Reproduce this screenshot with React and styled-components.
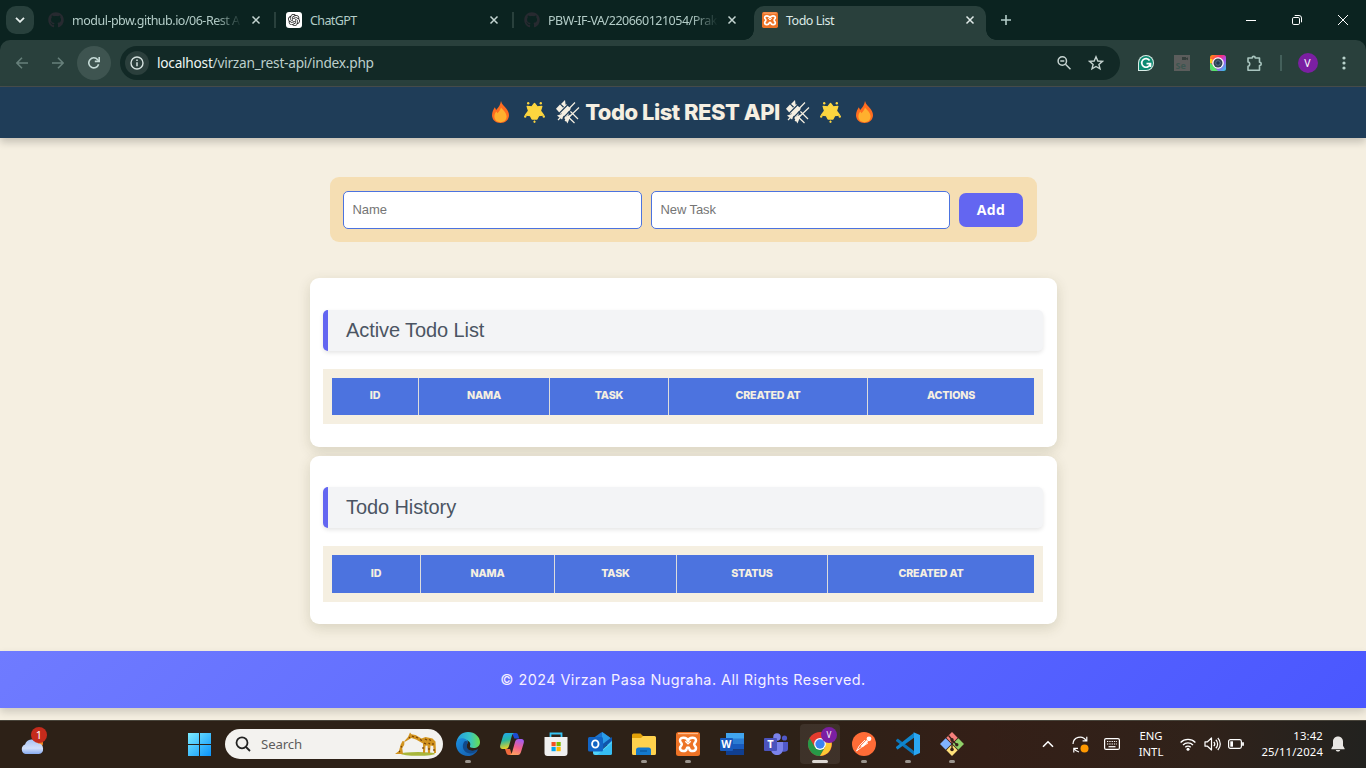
import React from 'react';
import styled, { createGlobalStyle } from 'styled-components';
import { FaGithub } from 'react-icons/fa';
import { SiOpenai } from 'react-icons/si';

const GlobalStyle = createGlobalStyle`
  * { box-sizing: border-box; }
  body { margin: 0; overflow: hidden; }
  svg { display: block; flex: none; }
`;

const UI = "'Noto Sans', 'Open Sans', sans-serif";
const POP = "Inter, 'Open Sans', sans-serif";
const ARIAL = "'Liberation Sans', Arial, sans-serif";

const Screen = styled.div`
  width: 1366px; height: 768px; display: flex; flex-direction: column; overflow: hidden;
  background: #f5efe1; font-family: ${UI};
`;

/* Browser chrome */
const TabStrip = styled.div`
  height: 40px; flex: none; background: #0b2320; display: flex; align-items: flex-start;
`;
const TabSearch = styled.div`
  width: 28px; height: 28px; margin: 6px 6px 0; border-radius: 10px; background: #28403c;
  display: flex; align-items: center; justify-content: center;
`;
const Tab = styled.div`
  width: 238px; height: 40px; padding-left: 8px; display: flex; align-items: center;
  font-size: 12.5px; color: #b3ccc7;
`;
const ActiveTab = styled(Tab)`
  position: relative; width: 232px; height: 34px; margin-top: 6px; padding: 0 0 6px 8px;
  background: #29403c; color: #dce9e6; border-radius: 10px 10px 0 0;
  &::before, &::after {
    content: ''; position: absolute; bottom: 0; width: 10px; height: 10px;
  }
  &::before { left: -10px; background: radial-gradient(circle at 0 0, transparent 9.5px, #29403c 10px); }
  &::after { right: -10px; background: radial-gradient(circle at 100% 0, transparent 9.5px, #29403c 10px); }
`;
const TabTitle = styled.span`
  width: 170px; margin: 2px -2px 0 8px; line-height: 18px; white-space: nowrap;
  letter-spacing: ${p => p.$ls || '-0.5px'};
  ${p => p.$fade && `-webkit-mask-image: linear-gradient(90deg, #000 143px, transparent 170px);`}
`;
const TabSep = styled.div`width: 2px; height: 16px; margin-left: 10px; background: #29403c;`;
const Favicon = styled.div`
  width: 16px; height: 16px; flex: none; border-radius: 3px; display: flex; align-items: center; justify-content: center;
  background: ${p => p.$bg || 'transparent'}; color: ${p => p.$c || '#fff'};
`;
const CloseSlot = styled.div`width: 16px; height: 16px; margin-left: 8px; display: flex; align-items: center; justify-content: center;`;
const NewTab = styled.div`width: 40px; height: 40px; display: flex; align-items: center; justify-content: center;`;
const WindowControls = styled.div`margin-left: auto; display: flex;`;
const WinButton = styled.div`width: 46px; height: 40px; display: flex; align-items: center; justify-content: center;`;

const ToolbarBack = styled.div`background: #0b2320; height: 47px; flex: none;`;
const Toolbar = styled.div`
  height: 47px; background: #29403c; border-radius: 10px 10px 0 0; border-bottom: 1px solid #474e4d;
  display: flex; align-items: center; padding-left: 4px;
`;
const Slot = styled.div`
  width: ${p => p.$w || 36}px; height: ${p => p.$h || 34}px; flex: none; display: flex; align-items: center; justify-content: center;
`;
const Reload = styled(Slot)`border-radius: 50%; background: #3e5450; margin: 0 9px 0 1px; `;
const Omnibox = styled.div`
  width: 1000px; height: 34px; border-radius: 17px; background: #122926; display: flex; align-items: center; padding: 0 8px 0 5px;
`;
const InfoDot = styled.div`width: 24px; height: 24px; border-radius: 50%; background: #2b3f3c; display: flex; align-items: center; justify-content: center;`;
const Url = styled.div`
  flex: 1; margin-left: 8px; color: #bdcfcb; font-size: 13.7px; line-height: 20px; letter-spacing: -0.25px;
  b { font-weight: 400; color: #eef6f4; }
`;
const Avatar = styled.div`
  width: 20px; height: 20px; border-radius: 50%; background: #7b1fa2; color: #fff; font-size: 10.5px;
  display: flex; align-items: center; justify-content: center;
`;
const Divider = styled.div`width: 2px; height: 16px; background: #44605b;`;

/* Page */
const Page = styled.div`height: 633px; flex: none; display: flex; flex-direction: column; align-items: center; background: #f5efe1;`;
const Header = styled.header`
  width: 100%; height: 51px; flex: none; background: #1f3d58; box-shadow: 0 4px 8px rgba(0,0,0,.2);
  display: flex; align-items: center; justify-content: center; padding: 0 2px 1px 0;
`;
const Title = styled.h1`
  width: 194px; margin: 0 6px; font: 800 22px/30px ${POP}; letter-spacing: -0.49px; color: #f5efe1; white-space: nowrap;
  display: flex; justify-content: center;
`;
const Gap = styled.span`width: ${p => p.$w}px;`;
const Form = styled.form`
  width: 707px; height: 65px; margin-top: 39px; flex: none; border-radius: 9px; background: #f5deb3; padding: 0 14px 0 13px;
  display: flex; align-items: center; gap: 9px;
`;
const Field = styled.input`
  width: 299px; height: 38px; padding: 0 9px; border: 1px solid #4c73df; border-radius: 5px; background: #fff;
  font: 13px ${ARIAL}; outline: 0;
  &::placeholder { color: #757575; opacity: 1; letter-spacing: -0.1px; }
`;
const AddButton = styled.button`
  width: 64px; height: 34px; padding: 0 0 0 1px; border: 0; border-radius: 7px; background: #6366f1; color: #fff;
  font: 700 14px ${"'Open Sans', sans-serif"}; letter-spacing: .3px;
`;
const Card = styled.section`
  width: 747px; height: ${p => p.$h}px; flex: none; margin-top: ${p => p.$mt}px; padding: ${p => p.$pt}px 14px 0 13px;
  background: #fff; border-radius: 9px; box-shadow: 0 4px 13px rgba(60,60,20,.16);
`;
const CardTitle = styled.h2`
  height: 41px; margin: 0 0 18px; padding-left: 18.5px; border-left: 5px solid #6366f1; border-radius: 5px; background: #f3f4f6;
  box-shadow: 0 2px 4px rgba(0,0,0,.1); font: 400 20px/40px ${ARIAL}; letter-spacing: -0.09px; color: #4b5563;
`;
const TableFrame = styled.div`height: ${p => p.$h}px; padding: 9px; background: #f5efe1;`;
const HeadRow = styled.div`
  height: 100%; display: grid; grid-template-columns: ${p => p.$cols}; background: #4c73df;
`;
const HeadCell = styled.div`
  display: flex; align-items: center; justify-content: center; padding: 0 0 2px 1px;
  border-right: ${p => (p.$last ? 0 : 1)}px solid #ddd;
  font: 800 10.7px ${POP}; letter-spacing: -0.2px; color: #f5efe1;
`;
const Footer = styled.footer`
  width: 100%; height: 57px; flex: none; margin-top: 27px; padding-bottom: 1px; display: flex; align-items: center; justify-content: center;
  background: linear-gradient(135deg, #6f7bff, #4a57ff); box-shadow: 0 4px 8px rgba(0,0,0,.16);
  font: 400 14.4px ${POP}; letter-spacing: .46px; color: #f5efff;
`;

/* Taskbar */
const Taskbar = styled.div`
  height: 48px; flex: none; border-top: 1px solid #48443a; padding-bottom: 1px; display: flex; align-items: center;
  background: linear-gradient(90deg, #2d2117, #2d2117 58%, #341f17 72%, #30221a 88%, #22221f);
  color: #fff;
`;
const Weather = styled.div`position: relative; width: 24px; height: 18px; margin-left: 20px; padding-top: 3px;`;
const Badge = styled.div`
  position: absolute; left: 11px; top: -8px; width: 16px; height: 16px; border-radius: 50%; background: #c42b1c;
  font-size: 11px; line-height: 16px; text-align: center;
`;
const StartSlot = styled.div`width: 23px; margin: 0 14px 0 144px;`;
const SearchPill = styled.div`
  width: 218px; height: 30px; border-radius: 15px; background: #f3f2ef; display: flex; align-items: center; padding: 0 5px 0 10px;
  color: #5c5c5c; font-size: 13.2px;
`;
const SearchText = styled.span`flex: 1; margin-left: 10px; line-height: 18px; letter-spacing: -0.1px;`;
const Apps = styled.div`display: flex; margin-left: 5px; gap: 4px;`;
const AppButton = styled.div`
  position: relative; width: 40px; height: 40px; border-radius: 4px; display: flex; align-items: center; justify-content: center;
  background: ${p => (p.$active ? 'rgba(255,255,255,.08)' : 'transparent')};
  &::after {
    content: ''; position: absolute; bottom: 1px; left: ${p => (p.$active ? 12 : 17)}px; width: ${p => (p.$active ? 16 : 6)}px; height: 3px;
    border-radius: 2px; background: ${p => (p.$active ? '#ddd8d2' : '#9a948d')}; display: ${p => (p.$open || p.$active ? 'block' : 'none')};
  }
`;
const Profile = styled.div`
  position: absolute; left: 21px; top: 3px; width: 16px; height: 16px; border-radius: 50%; background: #7b1fa2; font-size: 8px;
  line-height: 16px; text-align: center;
`;
const Tray = styled.div`margin-left: auto; display: flex; align-items: center; padding-right: 13px;`;
const TwoLines = styled.div`
  width: ${p => p.$w}px; text-align: ${p => p.$align}; font-size: 11.3px; line-height: 16px; white-space: nowrap;
  letter-spacing: ${p => p.$ls || 0};
`;

const Close = ({ c = '#c4d5d1' }) => (
  <CloseSlot><svg width="10" height="10" viewBox="0 0 10 10" stroke={c} strokeWidth="1.5"><path d="M1.5 1.5l7 7M8.500 1.5L1.5 8.500" /></svg></CloseSlot>
);
const Flame = () => (
  <svg width="17" height="22" viewBox="0 0 17 22">
    <path d="M9 0c.8 3.600 3 4.600 5 7.200C15.600 9.300 17 11.500 17 14.300 17 18.800 13.400 22 8.500 22S0 18.800 0 14.300C0 11 1.500 8.200 2.800 6.200c.7 1 1 2 1.300 2.800C6.600 6.500 8.500 3.500 9 0z" fill="#ff6d20" />
    <path d="M9 6.500c1 2 5.600 4.500 5.600 9 0 3.500-2.500 5.700-6 5.700s-6.200-2.200-6.200-5.700c0-2 .8-3.400 1.900-4.900.5.600.8 1 1.100 1.600C7 10.700 8.300 9 9 6.500z" fill="#ffb02e" />
  </svg>
);
const GlowStar = () => (
  <svg width="21" height="21" viewBox="0 0 21 21" fill="#fcd53f">
    <path d="M10.500 1.500L13.200 5l4.600-.6-1.400 4.500 3 4.100-4.800.6-1.700 3.400h-4.800l-1.700-3.400-4.800-.6 3-4.100-1.400-4.500L7.800 5z" stroke="#fcd53f" strokeWidth="1.400" strokeLinejoin="round" />
    <path d="M10.500 18.300l1.200 1.300c0 .9-.6 1.400-1.200 1.400s-1.200-.5-1.200-1.400z" />
    <circle cx="4.200" cy="1.300" r="1.200" /><circle cx="16.800" cy="1.300" r="1.200" /><circle cx="1.200" cy="14.500" r="1.200" /><circle cx="19.800" cy="14.500" r="1.200" />
  </svg>
);
const Wedges = () => (
  <svg width="24" height="24" viewBox="0 0 24 24">
    <g stroke="#f5efe1" strokeWidth="1.200" fill="none"><path d="M8 5l14 14M4 9l14.500 14M2 20L19 2.500M9 21L23 7.500" /></g>
    <g fill="#f5efe1"><path d="M9 0l1 8.500L5 4z" /><path d="M4 4.500l5.500 5.800L4.500 14 0 8.800z" /><path d="M10 4l5 5-4 4-4.500-4.500z" /><path d="M8 9l5 5-3.500 3.500-5-5z" /><path d="M1 15.500L9 13l-3 6.500z" /><path d="M8 17.500l7-3-3.500 9z" /></g>
    <path d="M3 13.500l13-13M7 18l13-13" stroke="#1f3d58" strokeWidth="1.100" />
  </svg>
);
const Xampp = ({ s = 16 }) => (
  <svg width={s} height={s} viewBox="0 0 24 24">
    <rect width="24" height="24" rx="2.500" fill="#ed7326" /><path d="M2 1.600h20" stroke="#ffba8a" strokeWidth="1.200" />
    <path d="M12 8.800C10.800 4.900 4 4.500 4 8.600c0 1.900 1.800 2 1.800 3.700S4 14.200 4 16c0 4 6 3.800 6.600.9.200-1 .6-1.300 1.400-1.300s1.200.3 1.400 1.300c.6 2.900 6.600 3.100 6.600-.9 0-1.800-1.800-2-1.800-3.700s1.800-1.800 1.800-3.700c0-4.100-6.800-3.700-8 .2z" stroke="#fff" strokeWidth="2.500" fill="none" strokeLinejoin="round" />
    <path d="M9.300 9.300L12 11.800l2.700-2.500" stroke="#fff" strokeWidth="1.500" fill="none" />
  </svg>
);
const Grammarly = () => (
  <svg width="16" height="16" viewBox="0 0 16 16"><path d="M0 16V8a8 8 0 1 1 8 8z" fill="#d9ece7" /><path d="M1 15V8a7 7 0 1 1 7 7z" fill="#0e8a72" /><path d="M11.600 5.500A4.300 4.300 0 1 0 12.200 9M8.500 8.700h4V12" fill="none" stroke="#fff" strokeWidth="1.700" /></svg>
);
const CameraIcon = () => (
  <svg width="16" height="16" viewBox="0 0 16 16">
    <defs><linearGradient id="cam" x1="0" y1="0" x2="1" y2="1"><stop offset="0" stopColor="#ff9d00" /><stop offset=".35" stopColor="#ff2d6f" /><stop offset=".6" stopColor="#b04cf0" /><stop offset="1" stopColor="#28d3e6" /></linearGradient></defs>
    <rect width="16" height="16" rx="2.500" fill="url(#cam)" /><path d="M0 5v8a3 3 0 0 0 3 3h5L0 7z" fill="#54e36a" /><path d="M0 4h2.500v4H0z" fill="#ffcf1c" />
    <circle cx="8" cy="8" r="5.800" fill="#fff" /><circle cx="8" cy="8" r="4.500" fill="#344555" /><circle cx="8" cy="8" r="2.300" fill="#203850" stroke="#5e7b95" strokeWidth=".8" />
  </svg>
);
const EdgeIcon = () => (
  <svg width="24" height="24" viewBox="0 0 24 24">
    <defs><linearGradient id="e1" x1="0" y1=".3" x2="1" y2=".3"><stop offset="0" stopColor="#249be0" /><stop offset=".55" stopColor="#35c3c8" /><stop offset="1" stopColor="#6ade4d" /></linearGradient>
      <linearGradient id="e2" x1="0" y1="0" x2="1" y2="1"><stop offset="0" stopColor="#1b8fe0" /><stop offset="1" stopColor="#1458a8" /></linearGradient></defs>
    <path d="M.5 10C1.500 4 6 0 12 0c7 0 12 5 12 10 0 4-3 6-6.500 6-2.500 0-4-.8-3.500-2 .7-1.500.6-5-4-6-3.500-.8-7 0-9.500 2z" fill="url(#e1)" />
    <path d="M0 12c0-4 4-6.500 8-5.500C12 7.500 12.500 10 11 12c-1.500 2-.5 7 5 7 2.500 0 4.500-1 5.800-1.800C20.500 21 16.500 24 12 24 5 24 0 18.500 0 12z" fill="url(#e2)" />
    <path d="M8 10c-3 5 0 11 6 11.500 3 .2 6-1.500 7.800-4.300-5 2.600-11 1.800-11-3.200 0-2 2-3 .2-4.500-1-.7-2.200-.5-3 .5z" fill="#114a8b" />
  </svg>
);
const CopilotIcon = () => (
  <svg width="24" height="22" viewBox="0 0 24 22">
    <defs><linearGradient id="c1" x1="0" y1="0" x2=".2" y2="1"><stop offset="0" stopColor="#21a6f5" /><stop offset=".5" stopColor="#27b7a0" /><stop offset="1" stopColor="#e4d12a" /></linearGradient>
      <linearGradient id="c2" x1=".6" y1="0" x2=".3" y2="1"><stop offset="0" stopColor="#a35cf0" /><stop offset=".5" stopColor="#f0608d" /><stop offset="1" stopColor="#ffa25e" /></linearGradient></defs>
    <path d="M12 0h4c1.500 0 2 1 2.500 3l.8 2.500h-5z" fill="#1c4bd2" />
    <path d="M6 0h8c-1.500.8-2 2-2.500 4L9 13c-.6 2-1.500 3-3.500 3H2.500C.4 16-.3 14.500.3 12L3 3C3.700 1 4.500 0 6 0z" fill="url(#c1)" />
    <path d="M5 16h5l2 6H9c-1.800 0-2.500-1-3-3z" fill="#f06a3c" />
    <path d="M18 22h-8c1.500-.8 2-2 2.500-4L15 9c.6-2 1.500-3 3.500-3h3c2.100 0 2.800 1.500 2.200 4L21 19c-.7 2-1.500 3-3 3z" fill="url(#c2)" />
  </svg>
);
const StoreIcon = () => (
  <svg width="24" height="24" viewBox="0 0 24 24"><path d="M6.500 6V1.500h11V6" fill="none" stroke="#35c3f3" strokeWidth="1.800" /><path d="M.5 5h23v16a3 3 0 0 1-3 3h-17a3 3 0 0 1-3-3z" fill="#f0f0f0" /><path fill="#f25022" d="M7.500 10h4.200v4.200H7.500z" /><path fill="#7fba00" d="M12.500 10h4.200v4.200h-4.200z" /><path fill="#00a4ef" d="M7.500 15h4.200v4.200H7.500z" /><path fill="#ffb900" d="M12.500 15h4.200v4.200h-4.200z" /></svg>
);
const OutlookIcon = () => (
  <svg width="24" height="24" viewBox="0 0 24 24"><path d="M4 7l9-6.500a2 2 0 0 1 2 0L24 7v6H4z" fill="#1b74cf" /><path d="M14 0l10 7-10 7z" fill="#2a9ce8" /><path d="M12 14L24 5v3l-9 9z" fill="#0f55ab" /><path d="M5 12l10 5 9-8v12a2 2 0 0 1-2 2H7a2 2 0 0 1-2-2z" fill="#4fd2fa" /><path d="M9 23l15-12v10a2 2 0 0 1-2 2z" fill="#36bdf3" /><rect y="5" width="15" height="14.500" rx="1.500" fill="#1264c4" /><ellipse cx="7.300" cy="12" rx="3.200" ry="3.600" fill="none" stroke="#fff" strokeWidth="1.900" /></svg>
);
const FolderIcon = () => (
  <svg width="24" height="22" viewBox="0 0 24 22"><path d="M0 2a1.500 1.500 0 0 1 1.500-1.500h7L11 3v3H0z" fill="#e2a108" /><path d="M0 5h9l2-2h11.500A1.500 1.500 0 0 1 24 4.500v16a1.500 1.500 0 0 1-1.500 1.500h-21A1.500 1.500 0 0 1 0 20.500z" fill="#ffd24d" /><path d="M4 22v-5a2.500 2.500 0 0 1 2.500-2.500h10A2.500 2.500 0 0 1 19 17v5z" fill="#1379cd" /><path d="M8 18h7" stroke="#0c5da4" strokeWidth="1.500" /></svg>
);
const Letter = styled.text`font: 700 ${p => p.$size || 11}px ${UI}; fill: ${p => p.$fill || '#fff'};`;
const WordIcon = () => (
  <svg width="24" height="22" viewBox="0 0 24 22"><path d="M6 0h18v6H6z" fill="#41a5ee" /><path d="M6 5.500h18V11H6z" fill="#2b7cd3" /><path d="M6 11h18v5.500H6z" fill="#185abd" /><path d="M6 16.500h18V22H6z" fill="#103f91" /><rect y="5" width="13" height="13" rx="1" fill="#185abd" /><Letter x="1.200" y="15" $size={10.5}>W</Letter></svg>
);
const TeamsIcon = () => (
  <svg width="24" height="22" viewBox="0 0 24 22"><circle cx="13" cy="4" r="3.800" fill="#7b83eb" /><circle cx="20.500" cy="5" r="2.600" fill="#5059c9" /><path d="M16 9h8v7c0 3-5 4-8 1z" fill="#5059c9" /><path d="M7 9h12v7c0 8-12 8-12 0z" fill="#7b83eb" /><rect y="5" width="13" height="13" rx="1" fill="#4b53bc" /><Letter x="3.300" y="15.300">T</Letter></svg>
);
const ChromeIcon = () => (
  <svg width="24" height="24" viewBox="0 0 24 24"><circle cx="12" cy="12" r="12" fill="#e33b2e" /><path d="M1.600 6A12 12 0 0 0 12 24l5.200-9H6.800z" fill="#279847" /><path d="M12 24A12 12 0 0 0 22.400 6.500H12L17.200 15z" fill="#fcc934" /><circle cx="12" cy="12" r="5.900" fill="#fff" /><circle cx="12" cy="12" r="4.700" fill="#3b83f2" /></svg>
);
const PostmanIcon = () => (
  <svg width="24" height="24" viewBox="0 0 24 24"><circle cx="12" cy="12" r="12" fill="#ff6c37" /><circle cx="17" cy="6.800" r="2.400" fill="#fff" /><path d="M14.500 8l1.700 1.700-5.500 5.500-2.400-1z" fill="#fff" /><path d="M13 8L7.500 13.500 4.500 19l6-4.500L16 11" fill="none" stroke="#fff" strokeWidth=".9" /></svg>
);
const CodeIcon = () => (
  <svg width="24" height="24" viewBox="0 0 24 24"><path d="M2 6.800L18 19v4L.2 9.200c-.4-.4-.3-.8 0-1.100l1-1.100c.2-.3.5-.3.800-.2z" fill="#0b75b8" /><path d="M.2 14.800L18 .8v5L2 17.300c-.3.200-.6.100-.8-.1l-1-1.200c-.3-.4-.3-.8 0-1.200z" fill="#0f86cd" /><path d="M17 0l7 3v18l-7 3c.8-.4 1-1 1-1.800V2c0-1-.3-1.600-1-2z" fill="#2aa6f2" /></svg>
);
const GitIcon = () => (
  <svg width="24" height="24" viewBox="0 0 24 24"><path d="M12 0l5.700 5.700L12 11.400 6.300 5.700z" fill="#f5807c" /><path d="M5.700 6.300L11.400 12l-5.700 5.700L0 12z" fill="#80b3ff" /><path d="M18.300 6.300L24 12l-5.700 5.700L12.600 12z" fill="#8fd069" /><path d="M12 12.600l5.700 5.700L12 24l-5.700-5.700z" fill="#ffe07a" /><path d="M8.500 3.500L12 7.500v11M12 8l5 5" stroke="#362019" strokeWidth="1.300" fill="none" /><circle cx="12" cy="7.700" r="1.700" fill="#362019" /><circle cx="16.800" cy="12.700" r="1.700" fill="#362019" /><circle cx="12" cy="17.500" r="1.800" fill="#362019" /></svg>
);
const Giraffes = () => (
  <svg width="44" height="24" viewBox="0 0 44 24">
    <ellipse cx="24" cy="21.800" rx="17" ry="1.900" fill="#a8b63a" />
    <path d="M1 22l4-3 1.500-6 2-4 2 .5-.3 3.500-2 3 .8 6z" fill="#d2941f" />
    <path d="M10 9.500L14 5l2-4.500 1.500 1.800 4 .7 6 3.500 4-1.500 7 1.500 3 3 .5 11.500h-2l-.8-7-2.700-.5-.5 7.500h-2l-.5-7.500-2 .2-.5 7.300h-2V11.500L22 7.500 17.500 6 11.500 9.500z" fill="#d2941f" />
    <path d="M18 4l2 1M22 5l2 1M26 7.500l2 1M31 7l2 1M35 7.500l2 1M30 11l2 1M34.500 11l1.500 1M39 11v2M15 5l1 1M7 14l1 1.500M5 19l1 1M29 15v2M40 17v2M35 16v2" stroke="#744008" strokeWidth="1.200" />
  </svg>
);

const Heads = ({ labels, cols, h }) => (
  <TableFrame $h={h}>
    <HeadRow $cols={cols}>
      {labels.map((l, i) => <HeadCell key={l} $last={i === labels.length - 1}>{l}</HeadCell>)}
    </HeadRow>
  </TableFrame>
);

const LargeXampp = () => <Xampp s={24} />;

const apps = [
  { Icon: EdgeIcon, open: true }, { Icon: CopilotIcon }, { Icon: StoreIcon }, { Icon: OutlookIcon },
  { Icon: FolderIcon, open: true }, { Icon: LargeXampp, open: true }, { Icon: WordIcon }, { Icon: TeamsIcon },
  { Icon: ChromeIcon, active: true }, { Icon: PostmanIcon, open: true }, { Icon: CodeIcon, open: true }, { Icon: GitIcon, open: true },
];

export default function App() {
  return (
    <Screen>
      <GlobalStyle />
      <TabStrip>
        <TabSearch><svg width="10" height="6" viewBox="0 0 10 6" fill="none" stroke="#e6efed" strokeWidth="1.800"><path d="M1 .8l4 4 4-4" /></svg></TabSearch>
        <Tab><Favicon $c="#272a30"><FaGithub size={16} /></Favicon><TabTitle $fade>modul-pbw.github.io/06-Rest A</TabTitle><Close /><TabSep /></Tab>
        <Tab><Favicon $bg="#fff" $c="#222"><SiOpenai size={12} /></Favicon><TabTitle $ls="-0.6px">ChatGPT</TabTitle><Close /><TabSep /></Tab>
        <Tab><Favicon $c="#272a30"><FaGithub size={16} /></Favicon><TabTitle $fade>PBW-IF-VA/220660121054/Prak</TabTitle><Close /></Tab>
        <ActiveTab><Favicon><Xampp /></Favicon><TabTitle>Todo List</TabTitle><Close c="#e0eae8" /></ActiveTab>
        <NewTab><svg width="10" height="10" viewBox="0 0 10 10" stroke="#b3ccc7" strokeWidth="1.600"><path d="M5 0v10M0 5h10" /></svg></NewTab>
        <WindowControls>
          <WinButton><svg width="10" height="10" stroke="#fff"><path d="M0 5.500h10" /></svg></WinButton>
          <WinButton><svg width="10" height="10" viewBox="0 0 10 10" stroke="#fff" fill="none"><rect x=".5" y="2.500" width="7" height="7" rx="1.300" /><path d="M2.700.5H7a2.500 2.500 0 0 1 2.500 2.500v4.300" /></svg></WinButton>
          <WinButton><svg width="10" height="10" viewBox="0 0 10 10" stroke="#fff"><path d="M0 0l10 10M10 0L0 10" /></svg></WinButton>
        </WindowControls>
      </TabStrip>
      <ToolbarBack>
        <Toolbar>
          <Slot><svg width="12" height="12" viewBox="0 0 12 12" fill="none" stroke="#67807b" strokeWidth="1.500"><path d="M12 6H1M6 .7L.9 6 6 11.300" /></svg></Slot>
          <Slot><svg width="12" height="12" viewBox="0 0 12 12" fill="none" stroke="#67807b" strokeWidth="1.500"><path d="M0 6h11M6 .7L11.100 6 6 11.300" /></svg></Slot>
          <Reload $w={34}><svg width="12" height="12" viewBox="0 0 12 12" fill="none" stroke="#c5dad6" strokeWidth="1.600"><path d="M10.600 7.200A5 5 0 1 1 9.700 2.700L11 4" /><path d="M11.200 0v4.400H6.800" /></svg></Reload>
          <Omnibox>
            <InfoDot><svg width="14" height="14" viewBox="0 0 14 14"><circle cx="7" cy="7" r="6" fill="none" stroke="#d5e2df" strokeWidth="1.400" /><path d="M7 6.200v4M7 3.600v1.500" stroke="#d5e2df" strokeWidth="1.500" /></svg></InfoDot>
            <Url><b>localhost</b>/virzan_rest-api/index.php</Url>
            <Slot $w={32}><svg width="14" height="14" viewBox="0 0 14 14" fill="none" stroke="#c5d3d0" strokeWidth="1.500"><circle cx="5.300" cy="5" r="4.200" /><path d="M8.500 8.200l5 5M3.300 5h4" /></svg></Slot>
            <Slot $w={32}><svg width="16" height="16" viewBox="0 0 16 16" fill="none" stroke="#c5d3d0" strokeWidth="1.400"><path d="M8 1.800l1.800 4.200 4.600.4-3.500 3 1.100 4.500-4-2.400-4 2.400 1.100-4.500-3.500-3 4.600-.4z" /></svg></Slot>
          </Omnibox>
          <Gap $w={8} />
          <Slot><Grammarly /></Slot>
          <Slot><svg width="16" height="16" viewBox="0 0 16 16"><rect width="16" height="16" fill="#5b5d5c" /><rect x="8" y="2" width="4" height="3" fill="#343f3c" /><path d="M12 3.200l2-1v3l-2-1z" fill="#343f3c" /><Letter x="1.500" y="14" $size={9} $fill="#3c5650">Se</Letter></svg></Slot>
          <Slot><CameraIcon /></Slot>
          <Slot><svg width="17" height="17" viewBox="0 0 17 17" fill="none" stroke="#a9c5bf" strokeWidth="1.600" strokeLinejoin="round"><path d="M2 3h4.200c0-2.200 3-2.200 3 0h4.300v4.300c2.300 0 2.300 3.200 0 3.200v4.700H2v-4c2.300 0 2.300-4.200 0-4.200z" /></svg></Slot>
          <Slot $w={17}><Divider /></Slot>
          <Slot $w={37}><Avatar>V</Avatar></Slot>
          <Slot $w={35}><svg width="4" height="14" viewBox="0 0 4 14" fill="#b9d2cc"><circle cx="2" cy="2" r="1.600" /><circle cx="2" cy="7" r="1.600" /><circle cx="2" cy="12" r="1.600" /></svg></Slot>
        </Toolbar>
      </ToolbarBack>

      <Page>
        <Header>
          <Flame /><Gap $w={15} /><GlowStar /><Gap $w={11} /><Wedges /><Title>Todo List REST API</Title><Wedges /><Gap $w={10} /><GlowStar /><Gap $w={15} /><Flame />
        </Header>
        <Form>
          <Field placeholder="Name" /><Field placeholder="New Task" /><AddButton type="button">Add</AddButton>
        </Form>
        <Card $h={169} $mt={36} $pt={32}>
          <CardTitle>Active Todo List</CardTitle>
          <Heads h={55} cols="87px 131px 119px 199px 1fr" labels={['ID', 'NAMA', 'TASK', 'CREATED AT', 'ACTIONS']} />
        </Card>
        <Card $h={168} $mt={9} $pt={31}>
          <CardTitle>Todo History</CardTitle>
          <Heads h={56} cols="89px 134px 122px 151px 1fr" labels={['ID', 'NAMA', 'TASK', 'STATUS', 'CREATED AT']} />
        </Card>
        <Footer>© 2024 Virzan Pasa Nugraha. All Rights Reserved.</Footer>
      </Page>

      <Taskbar>
        <Weather>
          <svg width="24" height="17" viewBox="0 0 24 17"><defs><linearGradient id="cl" x1="0" y1="0" x2="0" y2="1"><stop offset="0" stopColor="#a9c3f3" /><stop offset=".6" stopColor="#d2e0fb" /><stop offset="1" stopColor="#86aaf0" /></linearGradient></defs><circle cx="19" cy="5" r="4" fill="#f08a24" /><path d="M5.500 16a5 5 0 0 1-.5-9.500A7 7 0 0 1 18 5.500a5.300 5.300 0 0 1 .8 10.500z" fill="url(#cl)" /></svg>
          <Badge>1</Badge>
        </Weather>
        <StartSlot><svg width="23" height="23" viewBox="0 0 23 23"><defs><linearGradient id="win" x1="0" y1="0" x2="1" y2="1"><stop offset="0" stopColor="#7cecff" /><stop offset="1" stopColor="#0a93fa" /></linearGradient></defs><path d="M0 0h11v11H0zM12 0h11v11H12zM0 12h11v11H0zM12 12h11v11H12z" fill="url(#win)" /></svg></StartSlot>
        <SearchPill>
          <svg width="16" height="16" viewBox="0 0 16 16" fill="none" stroke="#222" strokeWidth="1.800"><circle cx="7" cy="6.800" r="5.500" /><path d="M11 11l4 4" /></svg>
          <SearchText>Search</SearchText><Giraffes />
        </SearchPill>
        <Apps>
          {apps.map(({ Icon, open, active }, i) => <AppButton key={i} $open={open} $active={active}><Icon />{active && <Profile>V</Profile>}</AppButton>)}
        </Apps>
        <Tray>
          <Slot $w={32}><svg width="12" height="8" viewBox="0 0 12 8" fill="none" stroke="#fff" strokeWidth="1.600"><path d="M1 6.800l5-5 5 5" /></svg></Slot>
          <Slot $w={32}><svg width="17" height="17" viewBox="0 0 17 17" fill="none" stroke="#fff" strokeWidth="1.200"><path d="M1 8a7 7 0 0 1 13-3.500M14.800.7v4.200h-4.200M6 12.300H1.800v4.200M1.800 12.300C3 14.500 4.500 15.500 7 16" /><circle cx="12.500" cy="12.500" r="4" fill="#ff9800" stroke="none" /></svg></Slot>
          <Slot $w={32}><svg width="16" height="12" viewBox="0 0 16 12" fill="none" stroke="#fff"><rect x=".6" y=".6" width="14.800" height="10.800" rx="1.500" strokeWidth="1.200" /><path d="M3 3.500h10M3 6h10" strokeDasharray="1.300 1" strokeWidth="1.200" /><path d="M4.500 8.700h7" strokeWidth="1.200" /></svg></Slot>
          <TwoLines $w={46} $align="center">ENG<br />INTL</TwoLines>
          <Slot $w={28}><svg width="16" height="13" viewBox="0 0 16 13" fill="none" stroke="#fff" strokeWidth="1.300"><path d="M.6 4.500a10.500 10.500 0 0 1 14.800 0M3 7a7 7 0 0 1 10 0M5.300 9.300a3.800 3.800 0 0 1 5.400 0" /><circle cx="8" cy="11.300" r="1.500" fill="#fff" stroke="none" /></svg></Slot>
          <Slot $w={20}><svg width="17" height="14" viewBox="0 0 17 14" fill="none" stroke="#fff" strokeWidth="1.200"><path d="M1 4.800h2.500L7.500 1v12L3.500 9.200H1z" strokeLinejoin="round" /><path d="M9.800 4.800a3.300 3.300 0 0 1 0 4.400M11.800 2.700a6 6 0 0 1 0 8.600M13.800 1a8.500 8.500 0 0 1 0 12" /></svg></Slot>
          <Slot $w={28}><svg width="16" height="10" viewBox="0 0 16 10" fill="none" stroke="#fff" strokeWidth="1.200"><rect x=".6" y=".6" width="12.800" height="8.800" rx="1.800" /><path d="M2.300 2.300H5v5.400H2.300z" fill="#fff" stroke="none" /><path d="M15 3.300v3.400" strokeWidth="1.800" /></svg></Slot>
          <TwoLines $w={73} $align="right" $ls="0.15px">13:42<br />25/11/2024</TwoLines>
          <Slot $w={30}><svg width="14" height="16" viewBox="0 0 14 16" fill="#e8e6e3"><path d="M7 .5c3 0 5 2.200 5 5v4.300l1.600 2.600v.8H.4v-.8L2 9.800V5.500c0-2.800 2-5 5-5zM4.800 14h4.400c-.3 1-1.200 1.600-2.200 1.600S5.100 15 4.800 14z" /></svg></Slot>
        </Tray>
      </Taskbar>
    </Screen>
  );
}
